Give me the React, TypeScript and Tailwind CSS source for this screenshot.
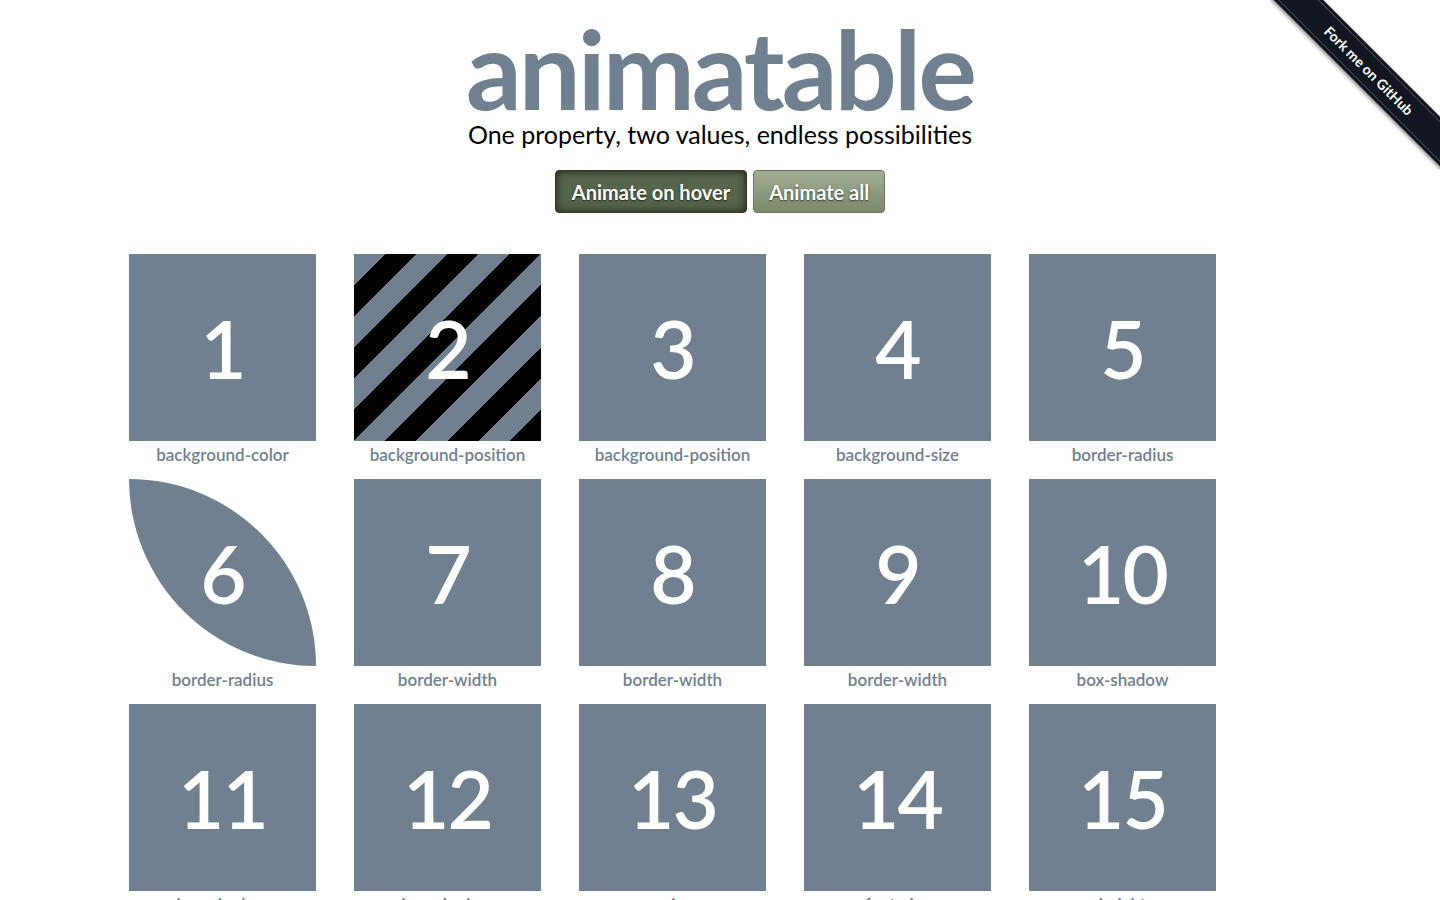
const tiles = [
  'background-color',
  'background-position',
  'background-position',
  'background-size',
  'border-radius',
  'border-radius',
  'border-width',
  'border-width',
  'border-width',
  'box-shadow',
  'box-shadow',
  'box-shadow',
  'color',
  'font-size',
  'height',
];

function Tile({ n, label }: { n: number; label: string }) {
  let shape = 'bg-[#708090]';
  if (n === 2) shape = 'bg-[repeating-linear-gradient(135deg,#708090_0_22px,#000_22px_44px)]';
  if (n === 6) shape = 'bg-[#708090] rounded-[0_100%]';

  return (
    <div className="flex w-[187px] flex-col items-center">
      <div className={`flex h-[187px] w-[187px] items-center justify-center ${shape}`}>
        <span className="text-[80px] font-semibold leading-none tracking-[-2px] text-white">{n}</span>
      </div>
      <div className="h-[38px] pt-[2px] text-[17px] font-semibold leading-[24px] text-[#708090]">{label}</div>
    </div>
  );
}

function Ribbon() {
  return (
    <div className="pointer-events-none absolute right-0 top-0 h-[170px] w-[170px] overflow-hidden">
      <div className="absolute left-[-41px] top-[53px] flex h-[35px] w-[280px] rotate-45 items-center bg-[#121621] shadow-[0_2px_4px_rgba(0,0,0,0.45)]">
        <div className="flex h-[29px] w-full items-center justify-center border-y border-white/20 text-[14px] font-bold text-white">
          Fork me on GitHub
        </div>
      </div>
    </div>
  );
}

export default function App() {
  return (
    <div className="relative min-h-screen bg-white font-['Lato','Liberation_Sans',sans-serif]">
      <Ribbon />
      <header className="flex flex-col items-center">
        <h1 className="mt-[12px] text-[110px] font-bold leading-[110px] tracking-[-3px] text-[#708090]">animatable</h1>
        <p className="text-[25px] leading-[24px] text-black">One property, two values, endless possibilities</p>
        <div className="mt-[24px] flex gap-[6px]">
          <button className="h-[43px] rounded-[4px] border border-[#2f3828] bg-[#56644a] px-[16px] text-[20px] font-bold text-white shadow-[inset_0_0_8px_rgba(0,0,0,0.7)] [text-shadow:0_1px_2px_#1b2015]">
            Animate on hover
          </button>
          <button className="h-[43px] rounded-[4px] border border-[#6b7660] bg-[linear-gradient(#a3ad95,#7b8869)] px-[15px] text-[20px] font-bold text-white [text-shadow:0_1px_2px_#2a3022]">
            Animate all
          </button>
        </div>
      </header>
      <main className="mx-auto mt-[41px] flex w-[1182px] flex-wrap gap-x-[38px]">
        {tiles.map((label, i) => (
          <Tile key={i} n={i + 1} label={label} />
        ))}
      </main>
    </div>
  );
}
